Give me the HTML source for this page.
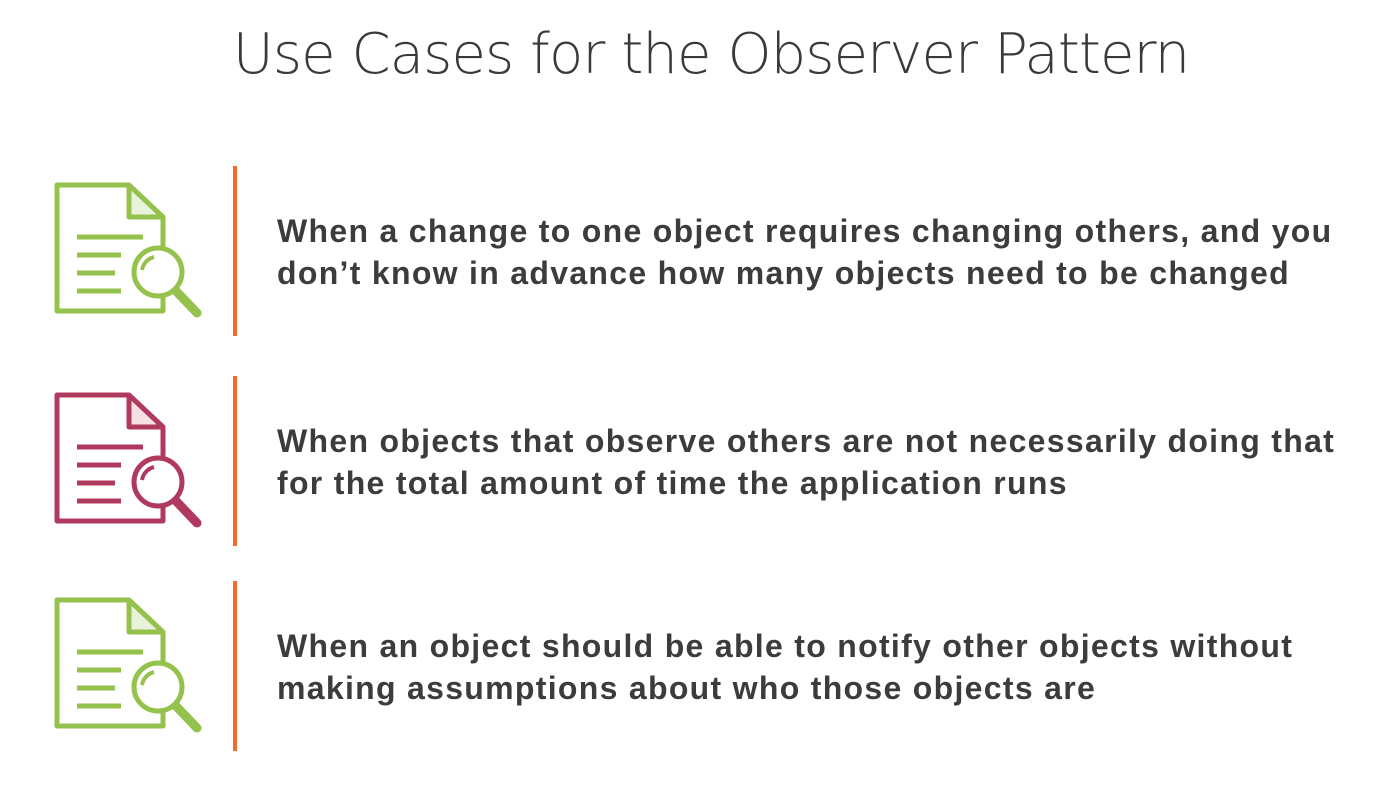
<!DOCTYPE html>
<html><head><style>
body{margin:0;width:1374px;height:812px;background:#fff;position:relative;overflow:hidden;font-family:"Liberation Sans",sans-serif}
h1{position:absolute;left:0;width:1422px;top:22px;margin:0;text-align:center;font-size:56px;color:#3a3a3a;letter-spacing:-0.9px;font-family:"DejaVu Sans","Liberation Sans",sans-serif;font-weight:200}
.bar{position:absolute;left:233px;width:4px;background:#f26a2e}
.t{position:absolute;left:277px;font-weight:bold;font-size:32px;letter-spacing:1.3px;line-height:42px;color:#3c3c3c;white-space:nowrap}
svg{position:absolute;left:0}
</style></head><body>
<h1>Use Cases for the Observer Pattern</h1>
<svg width="240" height="812" viewBox="0 0 240 812">
<defs>
<g id="ic" fill="none" stroke-width="5" stroke-linecap="butt">
<path d="M57,185 H129 L163,217 V311 H57 Z" stroke-linejoin="round"/>
<path d="M129,185 V217 H163" stroke-linejoin="round"/>
<path d="M77,237 H143 M77,255 H121 M77,273 H115 M77,291 H121"/>
<circle cx="158" cy="272" r="24" fill="#fff"/>
<path d="M176,291 L197,313" stroke-width="9" stroke-linecap="round"/>
<path d="M142,270 A16,16 0 0 1 154,257" stroke-width="4"/>
</g>
</defs>
<path d="M131,188 V215 H158 Z" fill="#e9f3dc"/>
<path d="M131,398 V425 H158 Z" fill="#f6e0e6"/>
<path d="M131,603 V630 H158 Z" fill="#e9f3dc"/>
<g stroke="#94c24c"><use href="#ic"/></g>
<g stroke="#b03a5e" transform="translate(0,210)"><use href="#ic"/></g>
<g stroke="#94c24c" transform="translate(0,415)"><use href="#ic"/></g>
</svg>
<div class="bar" style="top:166px;height:170px"></div>
<div class="bar" style="top:376px;height:170px"></div>
<div class="bar" style="top:581px;height:170px"></div>
<div class="t" style="top:210px">When a change to one object requires changing others, and you<br>don’t know in advance how many objects need to be changed</div>
<div class="t" style="top:420px">When objects that observe others are not necessarily doing that<br>for the total amount of time the application runs</div>
<div class="t" style="top:625px">When an object should be able to notify other objects without<br>making assumptions about who those objects are</div>
</body></html>
